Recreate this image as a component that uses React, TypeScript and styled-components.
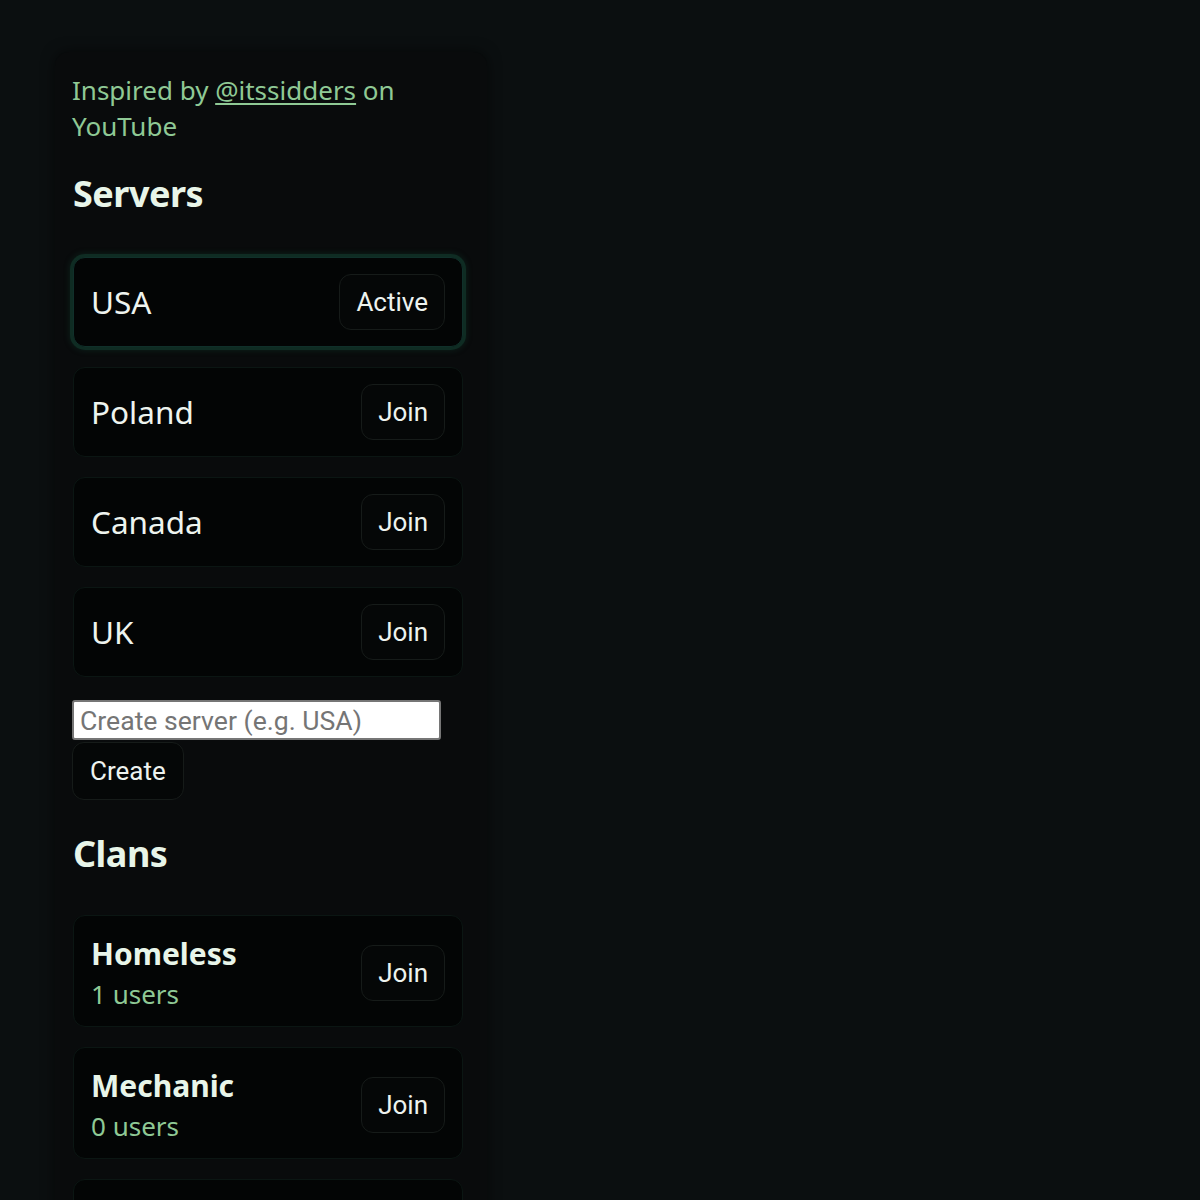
import React, { useState } from 'react';
import styled, { createGlobalStyle, css } from 'styled-components';

const GlobalStyle = createGlobalStyle`
  html, body {
    margin: 0;
    padding: 0;
    background: #0b0f10;
  }
  body {
    font-family: "Noto Sans", sans-serif;
    color: #e6f2e8;
  }
`;

const Page = styled.div`
  min-height: 1200px;
  padding: 52px 0 0 55px;
  box-sizing: border-box;
`;

const Panel = styled.div`
  width: 432px;
  min-height: 1148px;
  box-sizing: border-box;
  padding: 20px 24px 0 17px;
  background: #090b0c;
  border-radius: 14px 14px 0 0;
  box-shadow: 0 0 14px rgba(0, 0, 0, 0.55);
`;

const Credit = styled.p`
  margin: 0;
  font-size: 26px;
  line-height: 36px;
  color: #8fc995;

  a {
    color: #8fc995;
    text-decoration: underline;
    text-underline-offset: 3px;
  }
`;

const SectionTitle = styled.h2<{ $top: number; $bottom: number }>`
  margin: ${(p) => p.$top}px 0 ${(p) => p.$bottom}px 1px;
  font-size: 36px;
  line-height: 44px;
  font-weight: 700;
  letter-spacing: -0.5px;
  color: #e8f5e9;
`;

const List = styled.div`
  display: flex;
  flex-direction: column;
  gap: 20px;
  padding-left: 1px;
`;

const Card = styled.div<{ $active?: boolean; $tall?: boolean }>`
  display: flex;
  align-items: center;
  justify-content: space-between;
  width: 390px;
  box-sizing: border-box;
  padding: ${(p) => (p.$tall ? '16px 17px 13px' : '16px 17px')};
  background: #030505;
  border: 1px solid #0b1613;
  border-radius: 12px;
  ${(p) =>
    p.$active &&
    css`
      border-color: #10302a;
      box-shadow: 0 0 0 3px #0f2c23, 0 0 6px 3px rgba(20, 70, 52, 0.4);
    `}
`;

const ServerName = styled.span`
  font-size: 31.5px;
  line-height: 40px;
  color: #eef4ef;
`;

const ClanInfo = styled.div`
  display: flex;
  flex-direction: column;
`;

const ClanName = styled.span`
  font-size: 30px;
  line-height: 44px;
  font-weight: 700;
  color: #e8f5e9;
`;

const ClanUsers = styled.span`
  font-size: 26px;
  line-height: 37px;
  color: #8fc995;
`;

const Button = styled.button`
  font-family: Roboto, sans-serif;
  font-size: 26px;
  line-height: 28px;
  padding: 13px 16px;
  color: #eef3ef;
  background: #050707;
  border: 1px solid #161b19;
  border-radius: 12px;
  cursor: pointer;
`;

const CreateForm = styled.form`
  display: flex;
  flex-direction: column;
  align-items: flex-start;
  gap: 2px;
  margin-top: 23px;

  ${Button} {
    padding: 14px 17px;
  }
`;

const Input = styled.input`
  width: 369px;
  height: 40px;
  box-sizing: border-box;
  padding: 1px 6px;
  font-family: Roboto, sans-serif;
  font-size: 26.6px;
  color: #222;
  background: #fff;
  border: 2px solid #767676;
  border-radius: 3px;

  &::placeholder {
    color: #757575;
  }
`;

const servers = [
  { name: 'USA', active: true },
  { name: 'Poland' },
  { name: 'Canada' },
  { name: 'UK' },
];

const clans = [
  { name: 'Homeless', users: 1 },
  { name: 'Mechanic', users: 0 },
  { name: 'Police', users: 0 },
];

export default function App() {
  const [serverName, setServerName] = useState('');

  return (
    <>
      <GlobalStyle />
      <Page>
        <Panel>
          <Credit>
            Inspired by <a href="#">@itssidders</a> on YouTube
          </Credit>

          <SectionTitle $top={28} $bottom={41}>Servers</SectionTitle>
          <List>
            {servers.map((s) => (
              <Card key={s.name} $active={s.active}>
                <ServerName>{s.name}</ServerName>
                <Button>{s.active ? 'Active' : 'Join'}</Button>
              </Card>
            ))}
          </List>

          <CreateForm onSubmit={(e) => e.preventDefault()}>
            <Input
              placeholder="Create server (e.g. USA)"
              value={serverName}
              onChange={(e) => setServerName(e.target.value)}
            />
            <Button type="submit">Create</Button>
          </CreateForm>

          <SectionTitle $top={32} $bottom={39}>Clans</SectionTitle>
          <List>
            {clans.map((c) => (
              <Card key={c.name} $tall>
                <ClanInfo>
                  <ClanName>{c.name}</ClanName>
                  <ClanUsers>{c.users} users</ClanUsers>
                </ClanInfo>
                <Button>Join</Button>
              </Card>
            ))}
          </List>
        </Panel>
      </Page>
    </>
  );
}
